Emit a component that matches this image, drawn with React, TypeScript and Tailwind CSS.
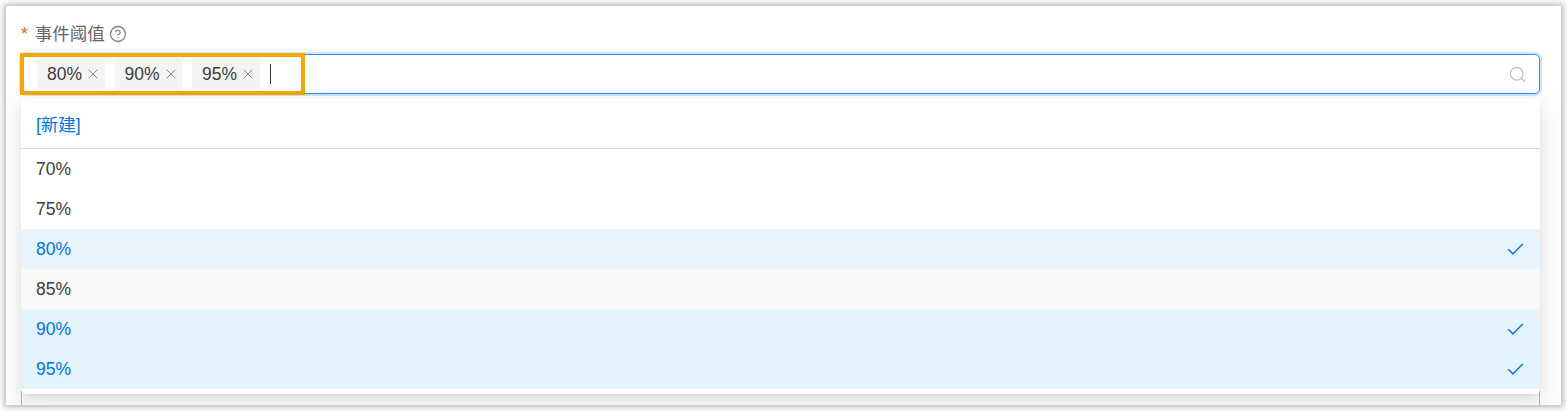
import { Search, Check, X, CircleHelp } from "lucide-react";

const font = { fontFamily: '"Liberation Sans", "Noto Sans CJK SC", sans-serif' };

function Tag({ label }: { label: string }) {
  return (
    <span className="flex h-[30px] items-center rounded-[4px] bg-[#f4f4f4] pl-[10px] pr-[3.5px] text-[17.5px] text-[#3d3d3d]">
      {label}
      <X className="ml-[3px] h-[16px] w-[16px] text-[#8c8c8c]" strokeWidth={1.5} />
    </span>
  );
}

function Row({ label, kind }: { label: string; kind: "plain" | "hover" | "sel" | "sel2" }) {
  const cls =
    kind === "plain"
      ? "text-[#3d3d3d]"
      : kind === "hover"
        ? "bg-[#f8f8f8] text-[#3d3d3d]"
        : kind === "sel"
          ? "bg-[#e9f5fc] text-[#0073e6]"
          : "bg-[#e3f4fe] text-[#0073e6]";
  return (
    <div className={`flex h-10 items-center justify-between pl-[15px] pr-[14px] text-[17.5px] ${cls}`}>
      <span>{label}</span>
      {(kind === "sel" || kind === "sel2") && <Check className="h-[21px] w-[21px] text-[#1677e5]" strokeWidth={1.7} />}
    </div>
  );
}

export default function App() {
  return (
    <div className="h-[411px] w-[1567px] bg-white p-[6px]" style={font}>
      <div className="relative h-[399px] w-full overflow-hidden bg-white pl-[15px] pr-[21px] pt-[18px] shadow-[0_0_6px_2px_rgba(0,0,0,0.3)]">
        <div className="flex h-5 items-center text-[17.5px] text-[#666666]">
          <span className="mr-[7px] text-[#e8622c]">*</span>
          <span>事件阈值</span>
          <CircleHelp className="ml-[4px] h-[18px] w-[18px] text-[#808080]" strokeWidth={1.7} />
        </div>
        <div className="relative mt-[10px] flex h-[40px] items-center justify-between rounded-[5px] border border-[#2f8ef0] pl-[15px] pr-[12px] shadow-[0_0_0_2px_#cfe5fb]">
          <div className="flex items-center gap-[10px]">
            <Tag label="80%" />
            <Tag label="90%" />
            <Tag label="95%" />
            <span className="h-[20px] w-px bg-[#333333]" />
          </div>
          <Search className="h-[19px] w-[19px] text-[#bfbfbf]" strokeWidth={1.6} />
          <div className="absolute left-[-2px] top-[-2px] h-[42px] w-[285px] border-[4px] border-[#f5a800]" />
        </div>
        <div className="absolute bottom-0 left-[15px] right-[21px] top-[380px] border-x border-[#b5b5b5]" />
        <div className="relative mt-[5px] rounded-[5px] bg-white pb-[5px] shadow-[0_6px_16px_rgba(0,0,0,0.08),0_3px_6px_-4px_rgba(0,0,0,0.12),0_9px_28px_8px_rgba(0,0,0,0.05)]">
          <div className="flex h-[50px] items-center border-b border-[#dddddd] pl-[15px] pt-[3px] text-[17.5px] text-[#0073e6]">[新建]</div>
          <Row label="70%" kind="plain" />
          <Row label="75%" kind="plain" />
          <Row label="80%" kind="sel" />
          <Row label="85%" kind="hover" />
          <Row label="90%" kind="sel2" />
          <Row label="95%" kind="sel2" />
        </div>
      </div>
    </div>
  );
}
